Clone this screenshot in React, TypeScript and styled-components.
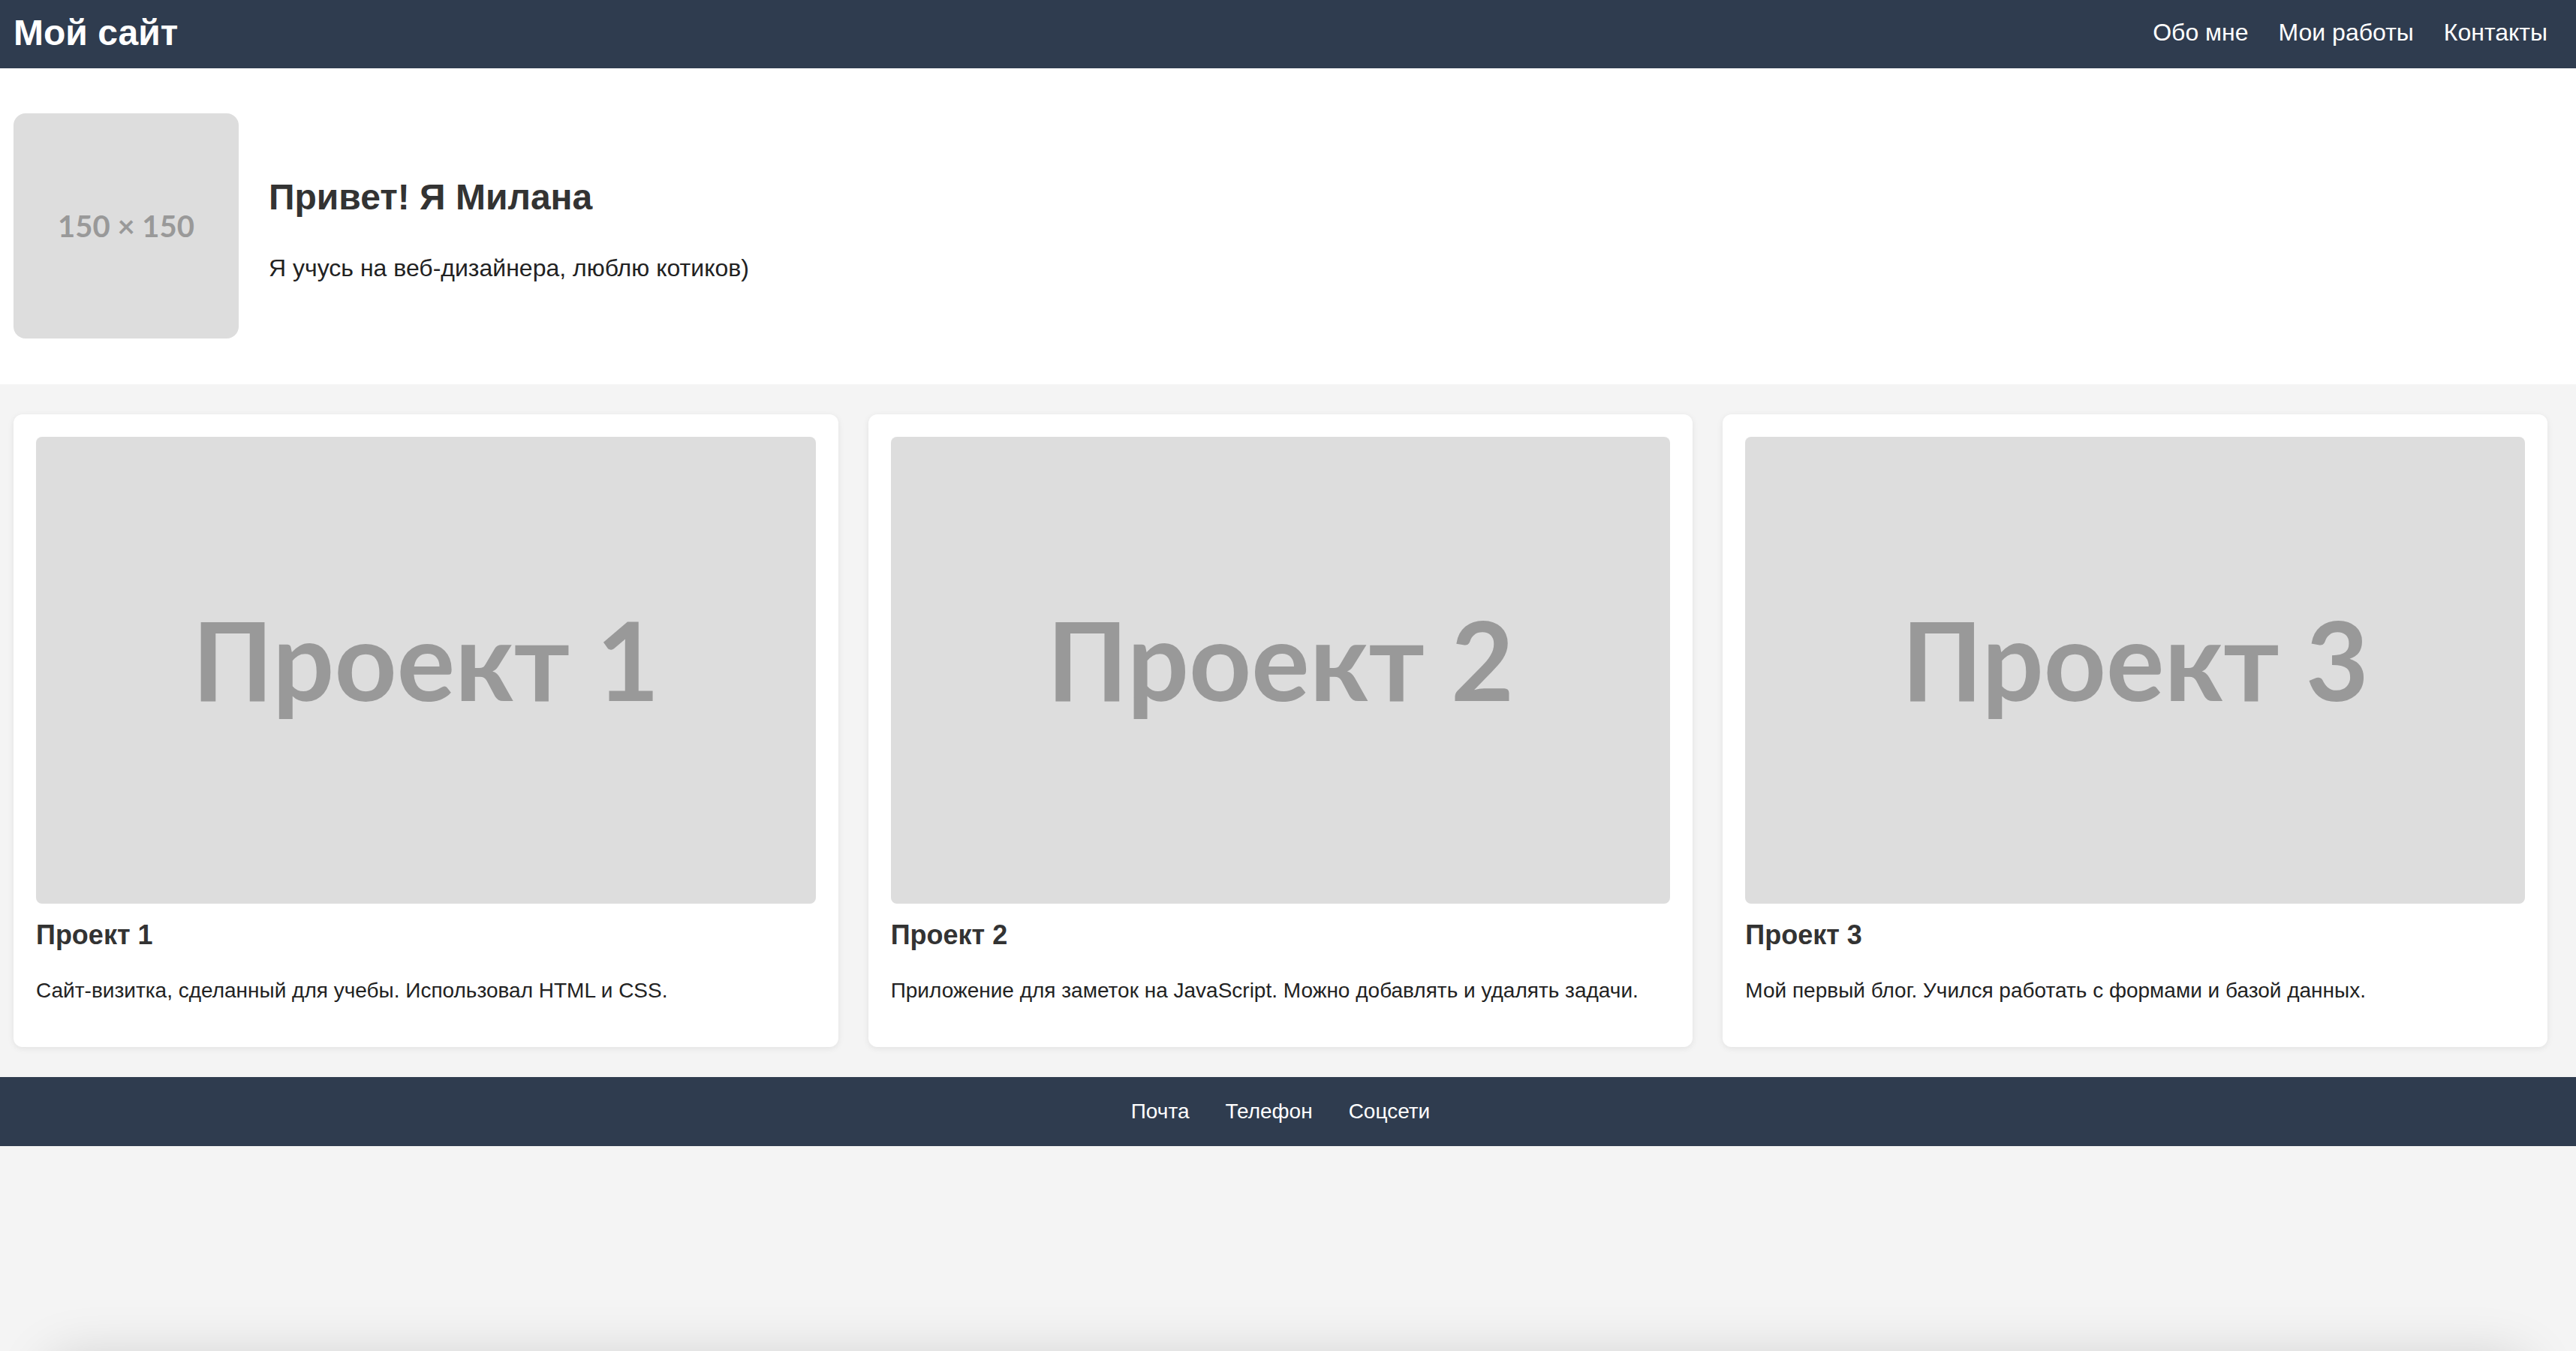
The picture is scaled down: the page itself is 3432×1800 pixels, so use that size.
import React from "react";
import styled, { createGlobalStyle } from "styled-components";

const GlobalStyle = createGlobalStyle`
  html, body {
    margin: 0;
    padding: 0;
  }
  body {
    background: #f4f4f4;
    font-family: "Liberation Sans", Arial, Helvetica, sans-serif;
    color: #333333;
  }
  * {
    box-sizing: border-box;
  }
`;

const Page = styled.div`
  height: 100vh;
  overflow: hidden;
  display: flex;
  flex-direction: column;
  background: #f4f4f4;
`;

const Header = styled.header`
  flex-shrink: 0;
  height: 91px;
  display: flex;
  align-items: center;
  justify-content: space-between;
  padding: 0 38px 4px 18px;
  background: #2f3c4f;
`;

const Logo = styled.h1`
  margin: 0;
  font-size: 48px;
  line-height: 1;
  font-weight: 700;
  color: #ffffff;
`;

const Nav = styled.nav`
  display: flex;
  gap: 40px;
`;

const NavLink = styled.a`
  color: #ffffff;
  font-size: 32px;
  text-decoration: none;
`;

const Hero = styled.section`
  flex-shrink: 0;
  display: flex;
  align-items: center;
  gap: 40px;
  padding: 60px 38px 61px 18px;
  background: #ffffff;
`;

const Placeholder = styled.div<{ $size: number; $bold?: boolean }>`
  display: flex;
  align-items: center;
  justify-content: center;
  background: #dddddd;
  color: #999999;
  font-family: Lato, "Open Sans", sans-serif;
  font-size: ${(p) => p.$size}px;
  font-weight: ${(p) => (p.$bold ? 700 : 400)};
  line-height: 1;
  white-space: nowrap;
`;

const Avatar = styled(Placeholder)`
  flex-shrink: 0;
  width: 300px;
  height: 300px;
  border-radius: 16px;
`;

const HeroText = styled.div`
  margin-top: 12px;
`;

const HeroTitle = styled.h2`
  margin: 0 0 44px;
  font-size: 48px;
  line-height: 1.2;
  font-weight: 700;
  color: #333333;
`;

const HeroLead = styled.p`
  margin: 0;
  font-size: 32px;
  line-height: 1.4;
  color: #222222;
`;

const Projects = styled.section`
  flex-shrink: 0;
  display: grid;
  grid-template-columns: repeat(3, 1fr);
  gap: 40px;
  padding: 40px 38px 40px 18px;
`;

const Card = styled.article`
  background: #ffffff;
  border-radius: 12px;
  padding: 30px 30px 56px;
  box-shadow: 0 2px 8px rgba(0, 0, 0, 0.08);
`;

const Thumb = styled(Placeholder)`
  width: 100%;
  aspect-ratio: 1038 / 622;
  border-radius: 8px;
  padding-bottom: 30px;
`;

const CardTitle = styled.h3`
  margin: 20px 0 0;
  font-size: 36px;
  line-height: 1.2;
  font-weight: 700;
  color: #333333;
`;

const CardText = styled.p`
  margin: 32px 0 0;
  font-size: 28px;
  line-height: 1.4;
  color: #222222;
`;

const Footer = styled.footer`
  flex-shrink: 0;
  height: 92px;
  display: flex;
  align-items: center;
  justify-content: center;
  gap: 48px;
  padding: 0 38px 0 18px;
  background: #2f3c4f;
`;

const FooterLink = styled.a`
  color: #ffffff;
  font-size: 28px;
  text-decoration: none;
`;

const Below = styled.div`
  flex-shrink: 0;
  height: 400px;
  margin: 280px 60px 0;
  border-radius: 40px;
  background: #f4f4f4;
  box-shadow: 0 0 70px rgba(0, 0, 0, 0.15);
`;

const projects = [
  { title: "Проект 1", text: "Сайт-визитка, сделанный для учебы. Использовал HTML и CSS." },
  { title: "Проект 2", text: "Приложение для заметок на JavaScript. Можно добавлять и удалять задачи." },
  { title: "Проект 3", text: "Мой первый блог. Учился работать с формами и базой данных." },
];

export default function App() {
  return (
    <>
      <GlobalStyle />
      <Page>
        <Header>
          <Logo>Мой сайт</Logo>
          <Nav>
            <NavLink href="#about">Обо мне</NavLink>
            <NavLink href="#works">Мои работы</NavLink>
            <NavLink href="#contacts">Контакты</NavLink>
          </Nav>
        </Header>
        <Hero id="about">
          <Avatar $size={40} $bold>
            150 × 150
          </Avatar>
          <HeroText>
            <HeroTitle>Привет! Я Милана</HeroTitle>
            <HeroLead>Я учусь на веб-дизайнера, люблю котиков)</HeroLead>
          </HeroText>
        </Hero>
        <Projects id="works">
          {projects.map((p) => (
            <Card key={p.title}>
              <Thumb $size={145} $bold>
                {p.title}
              </Thumb>
              <CardTitle>{p.title}</CardTitle>
              <CardText>{p.text}</CardText>
            </Card>
          ))}
        </Projects>
        <Footer id="contacts">
          <FooterLink href="#mail">Почта</FooterLink>
          <FooterLink href="#phone">Телефон</FooterLink>
          <FooterLink href="#social">Соцсети</FooterLink>
        </Footer>
        <Below />
      </Page>
    </>
  );
}
